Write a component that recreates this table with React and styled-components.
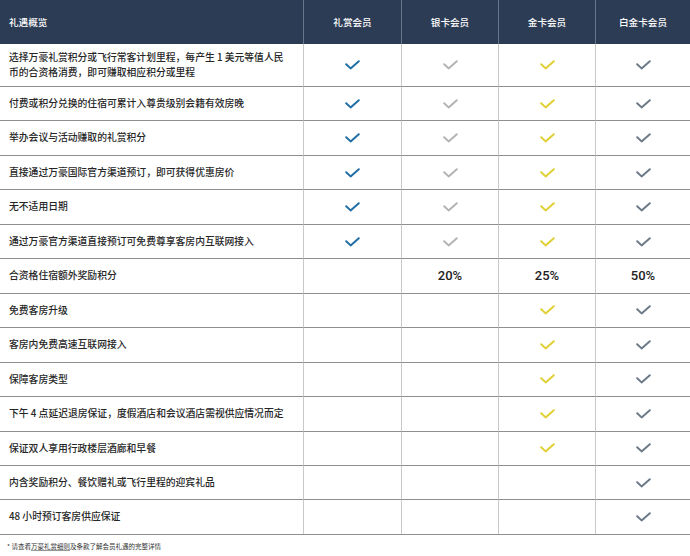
import React from 'react';
import { styled, createGlobalStyle } from 'styled-components';

const colors = {
	navy: '#2c3c54',
	text: '#262626',
	rowLine: '#8e8e8e',
	colLine: '#c9c9c9',
	member: '#1f6ea5',
	silver: '#b3b3b3',
	gold: '#e0cf35',
	platinum: '#6c7a88',
};

const tiers = [
	{ name: '礼赏会员', color: colors.member },
	{ name: '银卡会员', color: colors.silver },
	{ name: '金卡会员', color: colors.gold },
	{ name: '白金卡会员', color: colors.platinum },
];

const Y = true;

const rows = [
	{
		label: '选择万豪礼赏积分或飞行常客计划里程，每产生 1 美元等值人民\n币的合资格消费，即可赚取相应积分或里程',
		values: [Y, Y, Y, Y],
		tall: true,
	},
	{ label: '付费或积分兑换的住宿可累计入尊贵级别会籍有效房晚', values: [Y, Y, Y, Y] },
	{ label: '举办会议与活动赚取的礼赏积分', values: [Y, Y, Y, Y] },
	{ label: '直接通过万豪国际官方渠道预订，即可获得优惠房价', values: [Y, Y, Y, Y] },
	{ label: '无不适用日期', values: [Y, Y, Y, Y] },
	{ label: '通过万豪官方渠道直接预订可免费尊享客房内互联网接入', values: [Y, Y, Y, Y] },
	{ label: '合资格住宿额外奖励积分', values: [null, '20%', '25%', '50%'] },
	{ label: '免费客房升级', values: [null, null, Y, Y] },
	{ label: '客房内免费高速互联网接入', values: [null, null, Y, Y] },
	{ label: '保障客房类型', values: [null, null, Y, Y] },
	{ label: '下午 4 点延迟退房保证，度假酒店和会议酒店需视供应情况而定', values: [null, null, Y, Y] },
	{ label: '保证双人享用行政楼层酒廊和早餐', values: [null, null, Y, Y] },
	{ label: '内含奖励积分、餐饮赠礼或飞行里程的迎宾礼品', values: [null, null, null, Y] },
	{ label: '48 小时预订客房供应保证', values: [null, null, null, Y] },
];

const Check = ({ color }) => (
	<svg width="15" height="10" viewBox="0 0 15 10" fill="none">
		<path d="M1.2 4.2 L5.6 8.4 L13.8 1.2" stroke={color} strokeWidth="2" strokeLinecap="round" strokeLinejoin="round" />
	</svg>
);

const App = () => {
	return (
		<>
			<GlobalStyle />
			<Page>
				<Table>
					<HeadCell $first>礼遇概览</HeadCell>
					{tiers.map((t) => (
						<HeadCell key={t.name}>{t.name}</HeadCell>
					))}

					{rows.map((row, i) => (
						<React.Fragment key={i}>
							<LabelCell $tall={row.tall}>{row.label}</LabelCell>
							{row.values.map((v, j) => (
								<ValueCell key={j} $tall={row.tall}>
									{v === true && <Check color={tiers[j].color} />}
									{typeof v === 'string' && <Percent>{v}</Percent>}
								</ValueCell>
							))}
						</React.Fragment>
					))}
				</Table>

				<Note>
					* 请查看<NoteLink>万豪礼赏细则</NoteLink>及条款了解会员礼遇的完整详情
				</Note>
			</Page>
		</>
	);
};

const GlobalStyle = createGlobalStyle`
	html, body {
		margin: 0;
		padding: 0;
		background: #fff;
	}
	body {
		font-family: "Noto Sans CJK SC", "Liberation Sans", sans-serif;
		color: ${colors.text};
	}
`;

const Page = styled.div`
	width: 690px;
	height: 556px;
	overflow: hidden;
`;

const Table = styled.div`
	display: grid;
	grid-template-columns: 303px 98px 97px 97px 95px;
	border-bottom: 1px solid ${colors.rowLine};
`;

const HeadCell = styled.div`
	height: 44px;
	background: ${colors.navy};
	color: #fff;
	font-size: 9.6px;
	font-weight: 500;
	display: flex;
	align-items: center;
	justify-content: ${(p) => (p.$first ? 'flex-start' : 'center')};
	padding-left: ${(p) => (p.$first ? '9px' : '0')};
	border-left: ${(p) => (p.$first ? 'none' : '1px solid #68768a')};
	box-sizing: border-box;
`;

const LabelCell = styled.div`
	height: ${(p) => (p.$tall ? '42px' : '34.46px')};
	box-sizing: border-box;
	border-top: ${(p) => (p.$tall ? 'none' : `1px solid ${colors.rowLine}`)};
	padding: 0 6px 0 9px;
	display: flex;
	align-items: center;
	font-size: 9.8px;
	font-weight: 500;
	line-height: 15.5px;
	white-space: pre-line;
	color: ${colors.text};
`;

const ValueCell = styled.div`
	height: ${(p) => (p.$tall ? '42px' : '34.46px')};
	box-sizing: border-box;
	border-top: ${(p) => (p.$tall ? 'none' : `1px solid ${colors.rowLine}`)};
	border-left: 1px solid ${colors.colLine};
	display: flex;
	align-items: center;
	justify-content: center;
`;

const Percent = styled.span`
	font-family: Roboto, "Liberation Sans", sans-serif;
	font-size: 13px;
	font-weight: 500;
	color: #222;
`;

const Note = styled.div`
	padding: 7px 0 0 7px;
	font-size: 6.5px;
	line-height: 9px;
	color: #333;
`;

const NoteLink = styled.span`
	text-decoration: underline;
	text-decoration-color: #999;
	text-underline-offset: 1px;
`;

export default App;
